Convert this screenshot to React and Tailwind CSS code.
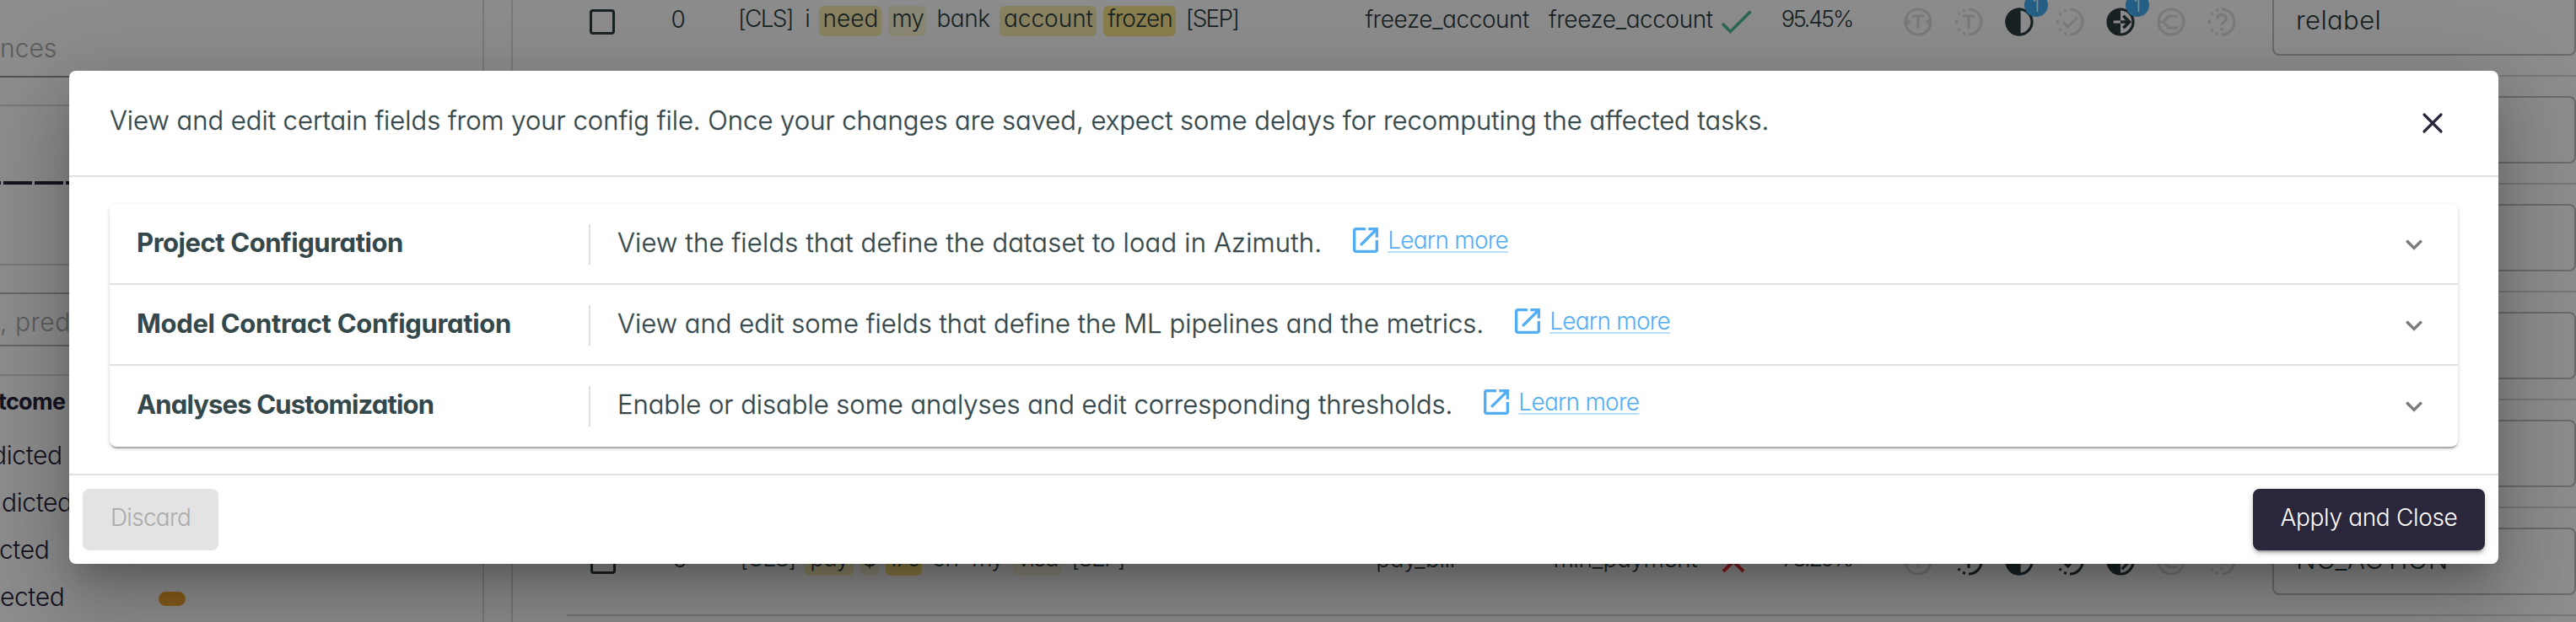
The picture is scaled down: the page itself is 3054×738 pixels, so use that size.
const FADED = "#dcdfde";
const INK = "#2c3d42";

const HalfDashedRing = () => (
  <>
    <path d="M12 3a9 9 0 0 1 0 18" />
    <path d="M9.6 3.3 7.9 4M5.7 5.6 4.6 6.8M3.2 10.6v2.8M4.6 17.2l1.1 1.2M7.9 20l1.7.7" />
  </>
);

function StatusIcon({ kind, active, badge }) {
  const color = active ? INK : FADED;
  return (
    <div className="relative flex w-[60px] justify-center">
      <svg width="40" height="40" viewBox="0 0 24 24" fill="none" stroke={color} strokeWidth="1.9">
        {kind === "circle-t" && (
          <>
            <circle cx="12" cy="12" r="9" />
            <path d="M7.6 7.8h8.8M12 7.8v9" />
            <path d="M3.5 8.6 7 12l-3.5 3.4zM20.5 8.6 17 12l3.5 3.4z" fill={color} stroke="none" />
          </>
        )}
        {kind === "dash-t" && (
          <>
            <HalfDashedRing />
            <path d="M7.6 7.8h8.8M12 7.8v9" />
          </>
        )}
        {kind === "half" && (
          <>
            <circle cx="12" cy="12" r="9" />
            <path d="M12 3a9 9 0 0 0 0 18z" fill={color} />
          </>
        )}
        {kind === "dash-check" && (
          <>
            <HalfDashedRing />
            <path d="m7.2 12.2 3.4 3.4 6.6-6.8" />
          </>
        )}
        {kind === "half-arrow" && (
          <>
            <circle cx="12" cy="12" r="9" />
            <path d="M12 3a9 9 0 0 0 0 18z" fill={color} stroke="none" />
            <path d="M7 12h5" stroke="#fff" />
            <path d="M12 12h6M14 7.6l4.3 4.4-4.3 4.4" strokeWidth="2.2" />
          </>
        )}
        {kind === "half-check" && (
          <>
            <circle cx="12" cy="12" r="9" />
            <path d="M12 3a9 9 0 0 0 0 18z" fill={color} stroke="none" />
            <path d="m13 17.6 5.4-5.6" />
          </>
        )}
        {kind === "circle-c" && (
          <>
            <circle cx="12" cy="12" r="9" />
            <path d="M3 12h3.6M16.6 7.8h-6.4L6.6 12l3.6 4.2h6.4" />
          </>
        )}
        {kind === "dash-q" && (
          <>
            <HalfDashedRing />
            <path d="M8.8 9.6c0-4 6.4-3.9 6.4 0 0 2.2-3.2 2.3-3.2 4.8M12 16v2" />
          </>
        )}
      </svg>
      {badge && (
        <span className="absolute -top-[14px] left-9 flex h-7 w-7 items-center justify-center rounded-full bg-[#46aef5] text-[21px] leading-none text-white">
          {badge}
        </span>
      )}
    </div>
  );
}

const ROWS = [
  {
    id: "0",
    tokens: [
      { t: "[CLS]", c: "w-[72px] tracking-[-1.7px]" },
      { t: "i", c: "w-3" },
      { t: "need", c: "w-[74px] bg-[#faedb0]" },
      { t: "my", c: "w-[45px] bg-[#fbf6d3] tracking-[-1.2px]" },
      { t: "bank", c: "w-[71px] tracking-[-0.5px]" },
      { t: "account", c: "w-[115px] bg-[#faedb0]" },
      { t: "frozen", c: "w-[86px] bg-[#fbe68e] tracking-[-1.1px]" },
      { t: "[SEP]", c: "w-[69px] tracking-[-1.8px]" },
    ],
    label: "freeze_account",
    pred: "freeze_account",
    ok: true,
    conf: "95.45%",
    icons: [
      { kind: "circle-t" },
      { kind: "dash-t" },
      { kind: "half", active: true, badge: "1" },
      { kind: "dash-check" },
      { kind: "half-arrow", active: true, badge: "1" },
      { kind: "circle-c" },
      { kind: "dash-q" },
    ],
    action: "relabel",
  },
  { action: "NO_ACTION" },
  { action: "NO_ACTION" },
  { action: "NO_ACTION" },
  { action: "NO_ACTION" },
  {
    id: "5",
    tokens: [
      { t: "[CLS]", c: "w-[72px] tracking-[-1.7px]" },
      { t: "pay", c: "w-[58px] bg-[#fcf1ba] tracking-[-1.2px]" },
      { t: "$", c: "w-[22px] bg-[#fbf3cf]" },
      { t: "170", c: "w-[43px] bg-[#fbe07c] tracking-[-1.8px]" },
      { t: "on", c: "w-[39px] tracking-[-1px]" },
      { t: "my", c: "w-[45px] tracking-[-1.2px]" },
      { t: "visa", c: "w-[58px] bg-[#fdf6df] tracking-[-1.3px]" },
      { t: "[SEP]", c: "w-[69px] tracking-[-1.8px]" },
    ],
    label: "pay_bill",
    pred: "min_payment",
    ok: false,
    conf: "78.29%",
    icons: [
      { kind: "circle-t" },
      { kind: "dash-t", active: true },
      { kind: "half", active: true },
      { kind: "dash-check", active: true },
      { kind: "half-check", active: true },
      { kind: "circle-c" },
      { kind: "dash-q" },
    ],
    action: "NO_ACTION",
  },
];

function TableRow({ row }) {
  return (
    <div className="flex h-32 shrink-0 items-center border-b-2 border-[#d8d8d8] text-[28px] leading-9 font-light text-[#2c3d42]">
      {row.id ? (
        <>
          <div className="flex w-[100px] justify-center">
            <div className="h-[30px] w-[30px] rounded-[4px] border-[3.4px] border-[#2c3d42]" />
          </div>
          <div className="w-[110px] pb-1.5 text-center tracking-[-1px]">{row.id}</div>
          <div className="flex w-[873px] gap-2 pl-[21px] pb-0.5">
            {row.tokens.map((k, i) => (
              <span key={i} className={"flex h-9 justify-center rounded-md leading-[31px] whitespace-nowrap " + k.c}>
                {k.t}
              </span>
            ))}
          </div>
          <div className="w-[240px] pb-1.5 pl-[23px] tracking-[-0.45px]">{row.label}</div>
          <div className="w-[240px] pb-1.5 pl-[23px] tracking-[-0.45px]">{row.pred}</div>
          <div className="flex w-[55px] pl-[9px]">
            {row.ok ? (
              <svg width="38" height="32" viewBox="0 0 38 32" fill="none" stroke="#50bd94" strokeWidth="3.6">
                <path d="m2 18 9.5 9.5L35.500 3.500" />
              </svg>
            ) : (
              <svg width="36" height="32" viewBox="0 0 36 32" fill="none" stroke="#f5333a" strokeWidth="4">
                <path d="m6 4 24 24M30 4 6 28" />
              </svg>
            )}
          </div>
          <div className="w-[138px] pb-1.5 text-right text-[27px] tracking-[-2.200px]">{row.conf}</div>
          <div className="ml-12 flex">
            {row.icons.map((ic, i) => (
              <StatusIcon key={i} {...ic} />
            ))}
          </div>
        </>
      ) : (
        <div className="w-[2224px]" />
      )}
      <div className="ml-[30px] flex h-20 w-[360px] shrink-0 items-center rounded-lg border-2 border-[#c2c2c2] pb-1 pl-[26px] text-[31px] tracking-[0.4px]">
        {row.action}
      </div>
    </div>
  );
}

function Backdrop() {
  return (
    <div className="flex h-[738px] w-[3054px] overflow-hidden bg-white">
      <aside className="flex w-[574px] shrink-0 flex-col border-r-2 border-[#dadada] font-light text-[#26233a]">
        <div className="h-[126px] border-b-2 border-[#dadada]">
          <div className="h-[92px] w-[500px] border-b-2 border-[#949494] pt-[38px] text-[30px] leading-[38px] text-[#a2abaa]">
            nces
          </div>
        </div>
        <div className="flex h-[189px] flex-col border-b-2 border-[#dadada] pt-[89px]">
          <div className="flex gap-[3px]">
            <div className="h-1 w-[1px] bg-[#26233a]" />
            <div className="h-1 w-[34px] bg-[#26233a]" />
            <div className="h-1 w-[34px] bg-[#26233a]" />
            <div className="h-1 w-[34px] bg-[#26233a]" />
          </div>
        </div>
        <div className="h-[131px] border-b-2 border-[#dadada] pt-8">
          <div className="h-[64px] w-[500px] border-y-2 border-[#b8b8b8] pt-[14px] text-[30px] leading-[38px] tracking-[0.5px] text-[#a2abaa]">
            , pred
          </div>
        </div>
        <div className="flex h-[66px] items-center pb-1 text-[27px] font-bold tracking-[-0.7px]">
          <span className="-ml-0.5">tcome</span>
        </div>
        <div className="flex h-14 items-center text-[30px] tracking-[-0.4px]">
          <span className="-ml-[10px]">dicted</span>
        </div>
        <div className="flex h-14 items-center pl-0.5 text-[30px] tracking-[-0.4px]">dicted</div>
        <div className="flex h-14 items-center text-[30px] tracking-[-0.4px]">
          <span className="-ml-px">cted</span>
        </div>
        <div className="flex h-14 items-center text-[30px] tracking-[-0.4px]">
          <span className="w-[188px]">ected</span>
          <div className="mt-1 h-[17px] w-8 rounded-full bg-[#f5a733]" />
        </div>
      </aside>
      <main className="ml-8 flex min-w-0 grow flex-col border-l-2 border-[#dadada] pl-16">
        <div className="-mt-[37px] flex flex-col">
          {ROWS.map((row, i) => (
            <TableRow key={i} row={row} />
          ))}
        </div>
      </main>
    </div>
  );
}

const SECTIONS = [
  {
    title: "Project Configuration",
    titleClass: "tracking-[-0.45px]",
    text: "View the fields that define the dataset to load in Azimuth.",
    textClass: "tracking-[0.2px]",
  },
  {
    title: "Model Contract Configuration",
    titleClass: "tracking-[-0.33px]",
    text: "View and edit some fields that define the ML pipelines and the metrics.",
    textClass: "tracking-[0.05px]",
  },
  {
    title: "Analyses Customization",
    titleClass: "tracking-[-0.86px]",
    text: "Enable or disable some analyses and edit corresponding thresholds.",
    textClass: "tracking-normal",
  },
];

function Section({ title, titleClass, text, textClass, last }) {
  return (
    <div
      className={
        "flex h-24 items-center pr-8 pl-8 text-[31px] leading-[38px] text-[#34474b] " +
        (last ? "" : "shadow-[inset_0_-2px_0_#e0e0e0]")
      }
    >
      <div className={"w-[536px] pb-1 font-bold whitespace-nowrap " + titleClass}>{title}</div>
      <div className="flex h-12 items-center border-l-2 border-[#e0e0e0] pl-8">
        <span className={"pb-1 font-light whitespace-nowrap [-webkit-text-stroke:0.3px_#34474b] " + textClass}>
          {text}
        </span>
        <a className="ml-8 flex items-center pb-2.5 text-[28px] font-light text-[#51aef5]">
          <svg width="40" height="40" viewBox="0 0 24 24" fill="currentColor">
            <path d="M19 19H5V5h7V3H5c-1.110 0-2 .9-2 2v14c0 1.100.89 2 2 2h14c1.100 0 2-.9 2-2v-7h-2v7zM14 3v2h3.590l-9.830 9.830 1.410 1.410L19 6.410V10h2V3h-7z" />
          </svg>
          <span className="ml-1.5 tracking-[-0.75px] underline decoration-[#b9dffc] decoration-2 underline-offset-[3px]">
            Learn more
          </span>
        </a>
      </div>
      <svg className="ml-auto text-[#7c7c7c]" width="40" height="40" viewBox="0 0 24 24" fill="currentColor">
        <path d="M16.590 8.590 12 13.170 7.410 8.590 6 10l6 6 6-6z" />
      </svg>
    </div>
  );
}

export default function App() {
  return (
    <div className="relative h-[738px] w-[3054px] overflow-hidden font-['Inter',sans-serif] [font-feature-settings:'cv11']">
      <Backdrop />
      <div className="absolute inset-0 bg-black/45" />
      <div className="absolute top-[84px] left-[82px] flex h-[585px] w-[2880px] flex-col rounded-lg bg-white shadow-[0_22px_30px_-14px_rgba(0,0,0,0.2),0_48px_76px_6px_rgba(0,0,0,0.14),0_18px_92px_16px_rgba(0,0,0,0.12)]">
        <header className="flex h-[126px] items-center justify-between border-b-2 border-[#e0e0e0] pr-[58px] pl-12">
          <p className="pb-[5px] text-[31px] font-light whitespace-nowrap text-[#34474b] [-webkit-text-stroke:0.3px_#34474b]">
            View and edit certain fields from your config file. Once your changes are saved, expect some delays for
            recomputing the affected tasks.
          </p>
          <svg width="40" height="40" viewBox="0 0 40 40" fill="none" stroke="#2a273c" strokeWidth="3.2" strokeLinecap="round">
            <path d="m10 10 20 20M30 10 10 30" />
          </svg>
        </header>
        <div className="grow px-12 py-8">
          <div className="rounded-lg shadow-[0_4px_2px_-2px_rgba(0,0,0,0.2),0_2px_2px_0_rgba(0,0,0,0.14),0_2px_6px_0_rgba(0,0,0,0.12)]">
            {SECTIONS.map((s, i) => (
              <Section key={s.title} {...s} last={i === SECTIONS.length - 1} />
            ))}
          </div>
        </div>
        <footer className="flex h-[107px] items-center justify-between border-t-2 border-[#e0e0e0] px-4 text-[28px] font-light">
          <button className="h-[73px] w-[161px] rounded-lg bg-[#e3e3e3] pb-1.5 tracking-[-0.7px] text-[#aaaaaa]">
            Discard
          </button>
          <button className="h-[73px] w-[275px] rounded-lg bg-[#2a273c] pb-1.5 tracking-[-0.33px] text-white shadow-[0_6px_2px_-4px_rgba(0,0,0,0.2),0_4px_4px_0_rgba(0,0,0,0.14),0_2px_10px_0_rgba(0,0,0,0.12)]">
            Apply and Close
          </button>
        </footer>
      </div>
    </div>
  );
}
